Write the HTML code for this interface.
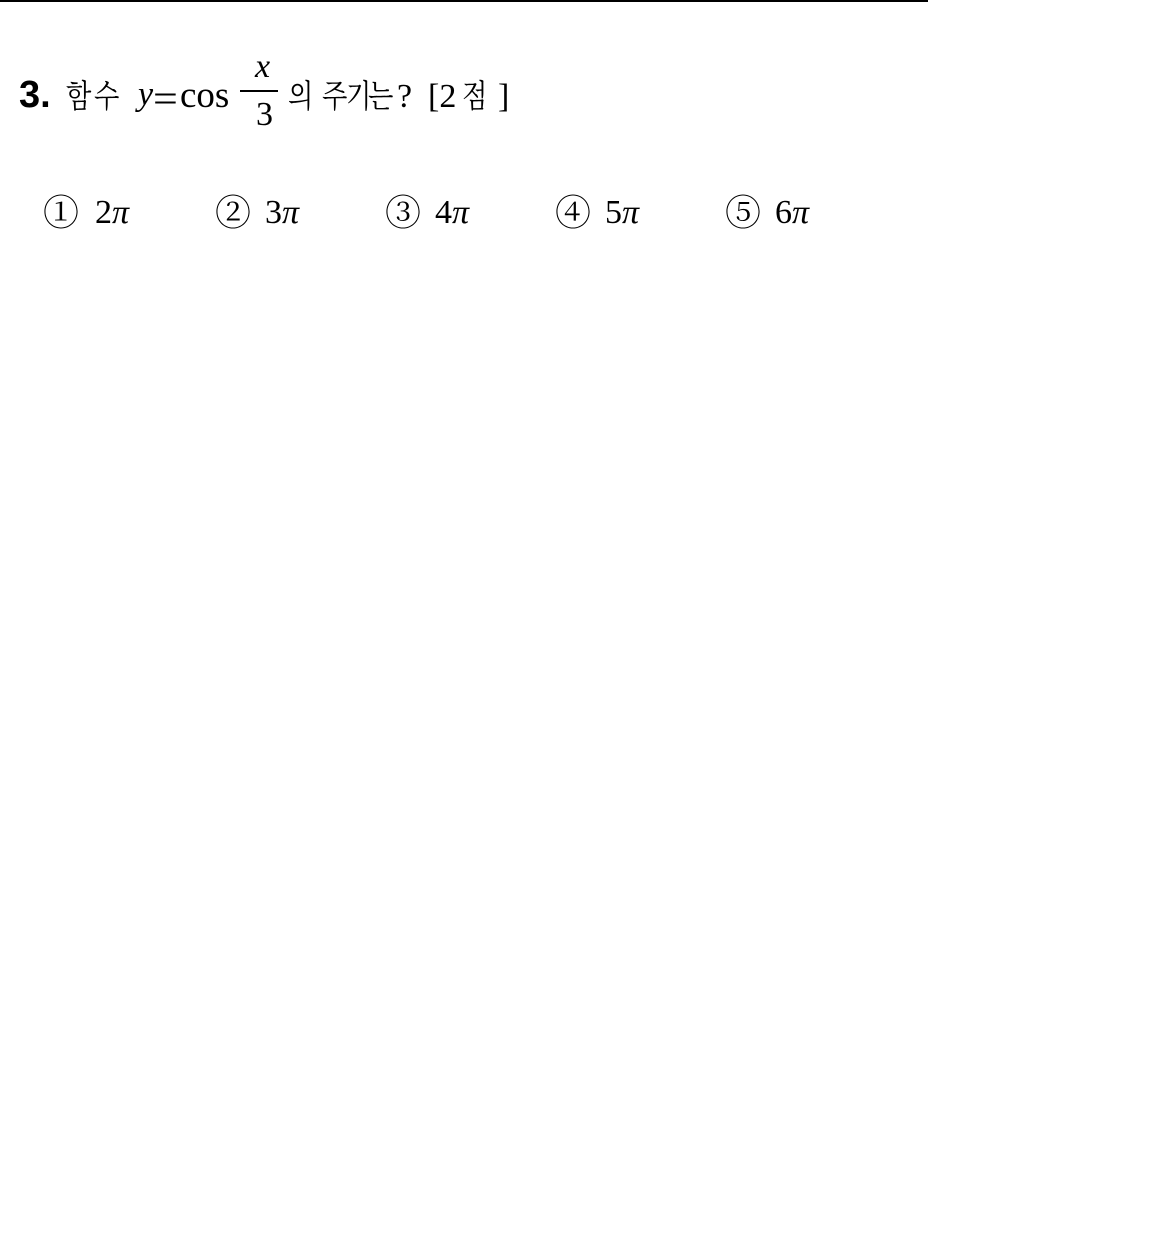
<!DOCTYPE html>
<html><head><meta charset="utf-8"><style>
body{margin:0;width:1164px;height:1248px;background:#fff;position:relative;overflow:hidden;font-family:"Liberation Serif","Noto Serif CJK SC","NanumGothic",serif;color:#000}
.a{position:absolute;white-space:nowrap;line-height:1}
.k{font-family:"Noto Serif CJK SC",serif;font-size:32px;transform:scaleX(0.82);transform-origin:left}
.c{font-family:"Noto Serif CJK SC",serif;font-size:36px}
.m{font-size:34px}
.i{font-style:italic}
</style></head><body>
<div style="position:absolute;left:0;top:0;width:928px;height:2px;background:#000"></div>
<div class="a" style="left:19px;top:76px;font-family:'Liberation Sans',sans-serif;font-weight:bold;font-size:38px">3.</div>
<div class="a k" style="left:66px;top:78px">함</div>
<div class="a k" style="left:94px;top:78px">수</div>
<div class="a m i" style="left:138px;top:78px">y</div>
<div class="a" style="left:153px;top:79px;font-size:40px;transform:scaleX(1.1);transform-origin:left">=</div>
<div class="a" style="left:180px;top:77px;font-size:37px">cos</div>
<div class="a m i" style="left:255px;top:50px">x</div>
<div style="position:absolute;left:240px;top:90px;width:38px;height:2px;background:#000"></div>
<div class="a m" style="left:256px;top:98px">3</div>
<div class="a k" style="left:288px;top:78px">의</div>
<div class="a k" style="left:322px;top:78px">주</div>
<div class="a k" style="left:346px;top:78px">기</div>
<div class="a k" style="left:368px;top:78px">는</div>
<div class="a m" style="left:397px;top:80px">?</div>
<div class="a m" style="left:428px;top:80px">[2</div>
<div class="a k" style="left:462px;top:78px">점</div>
<div class="a m" style="left:498px;top:80px">]</div>
<div class="a c" style="left:43px;top:193px">①</div><div class="a m" style="left:95px;top:196px">2<span class="i">π</span></div>
<div class="a c" style="left:215px;top:193px">②</div><div class="a m" style="left:265px;top:196px">3<span class="i">π</span></div>
<div class="a c" style="left:385px;top:193px">③</div><div class="a m" style="left:435px;top:196px">4<span class="i">π</span></div>
<div class="a c" style="left:555px;top:193px">④</div><div class="a m" style="left:605px;top:196px">5<span class="i">π</span></div>
<div class="a c" style="left:725px;top:193px">⑤</div><div class="a m" style="left:775px;top:196px">6<span class="i">π</span></div>
</body></html>
